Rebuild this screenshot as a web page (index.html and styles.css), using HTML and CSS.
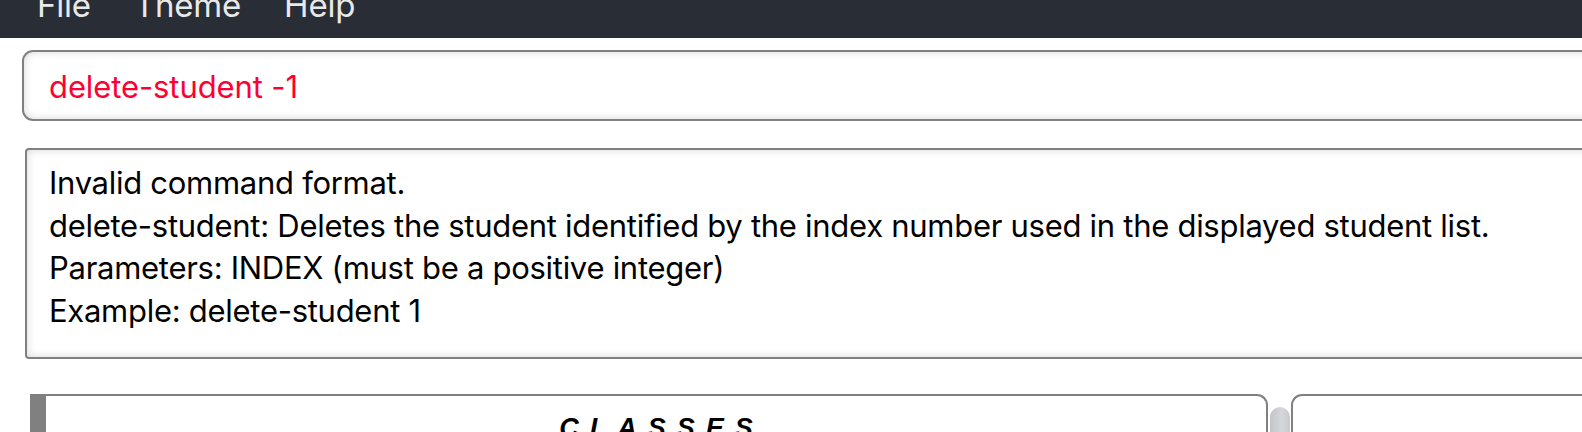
FILE: index.html
```html
<!DOCTYPE html>
<html lang="en">
<head>
<meta charset="utf-8">
<title>TA Assistant</title>
<link rel="stylesheet" href="styles.css">
</head>
<body>
<div class="app">
  <nav class="menubar">
    <span class="menu-item">File</span>
    <span class="menu-item">Theme</span>
    <span class="menu-item">Help</span>
  </nav>
  <main class="content">
    <div class="command-box">
      <span class="command-text">delete-student -1</span>
    </div>
    <div class="result-box">
      <p class="result-line">Invalid command format.</p>
      <p class="result-line">delete-student: Deletes the student identified by the index number used in the displayed student list.</p>
      <p class="result-line">Parameters: INDEX (must be a positive integer)</p>
      <p class="result-line">Example: delete-student 1</p>
    </div>
    <div class="panels">
      <section class="panel classes-panel">
        <div class="accent-bar"></div>
        <div class="panel-body">
          <h2 class="panel-title">CLASSES</h2>
        </div>
      </section>
      <div class="scrollbar"><div class="thumb"></div></div>
      <section class="panel side-panel"></section>
    </div>
  </main>
</div>
</body>
</html>
```
FILE: styles.css
```css
html, body {
  margin: 0;
  padding: 0;
  background: #ffffff;
}
body {
  width: 1582px;
  height: 432px;
  overflow: hidden;
  font-family: "Inter", "Liberation Sans", sans-serif;
}
.app {
  display: flex;
  flex-direction: column;
  width: 1582px;
  height: 432px;
  overflow: hidden;
}
.menubar {
  height: 38px;
  flex: 0 0 38px;
  background: #292d35;
  display: flex;
  align-items: flex-start;
  overflow: hidden;
  padding-left: 37px;
  gap: 43px;
}
.menu-item {
  color: #e9e9e9;
  font-size: 33px;
  line-height: 38px;
  margin-top: -14px;
  letter-spacing: -0.2px;
}
.content {
  display: flex;
  flex-direction: column;
}
.command-box {
  margin-top: 12px;
  margin-left: 22px;
  width: 1620px;
  height: 71px;
  box-sizing: border-box;
  border: 2px solid #808080;
  border-radius: 11px;
  box-shadow: inset 0 0 8px rgba(0,0,0,0.16);
  display: flex;
  align-items: center;
  padding-left: 25px;
}
.command-text {
  color: #ff0033;
  font-size: 31px;
  line-height: 36px;
  margin-top: 2px;
  letter-spacing: -0.1px;
}
.result-box {
  margin-top: 27px;
  margin-left: 25px;
  width: 1620px;
  height: 211px;
  box-sizing: border-box;
  border: 2px solid #808080;
  border-radius: 4px;
  box-shadow: inset 0 0 8px rgba(0,0,0,0.16);
  padding: 12px 0 0 22px;
}
.result-line {
  margin: 0;
  color: #000000;
  font-size: 31px;
  line-height: 42.5px;
  letter-spacing: -0.28px;
  white-space: nowrap;
}
.panels {
  margin-top: 35px;
  margin-left: 30px;
  display: flex;
  align-items: flex-start;
  height: 60px;
}
.panel {
  box-sizing: border-box;
  height: 60px;
  border-top: 2px solid #808080;
}
.classes-panel {
  width: 1238px;
  display: flex;
  border-right: 2px solid #808080;
  border-top-right-radius: 11px;
}
.accent-bar {
  width: 16px;
  flex: 0 0 16px;
  background: #808080;
  margin-top: -1px;
}
.panel-body {
  flex: 1;
  display: flex;
  justify-content: center;
}
.panel-title {
  margin: 0;
  padding-top: 17px;
  padding-left: 11px;
  font-family: "Liberation Sans", sans-serif;
  font-style: italic;
  font-weight: bold;
  font-size: 27px;
  letter-spacing: 11px;
  color: #000000;
  line-height: 30px;
}
.scrollbar {
  width: 20px;
  flex: 0 0 20px;
  margin-left: 2px;
  padding-top: 13px;
}
.thumb {
  height: 60px;
  border-radius: 10px 10px 0 0;
  background: linear-gradient(90deg, #c3c4c8 0%, #d6d7da 60%, #c9cacd 100%);
}
.side-panel {
  flex: 1;
  margin-left: 1px;
  border-left: 2px solid #808080;
  border-top-left-radius: 11px;
}
```
